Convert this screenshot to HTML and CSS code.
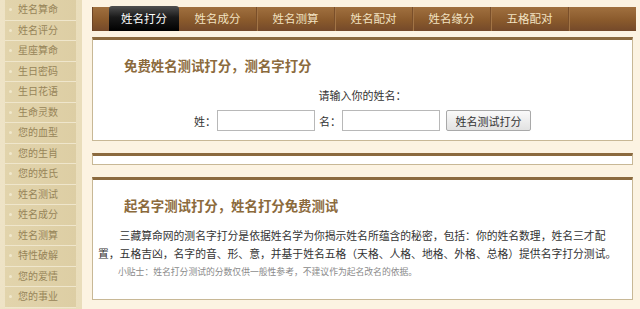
FILE: index.html
```html
<!DOCTYPE html>
<html lang="zh-CN">
<head>
    <meta charset="UTF-8">
    <title>姓名打分</title>
    <link rel="stylesheet" href="styles.css">
</head>
<body>
    <!-- 左侧导航 -->
    <ul class="side-nav">
        <li>姓名算命</li>
        <li>姓名评分</li>
        <li>星座算命</li>
        <li>生日密码</li>
        <li>生日花语</li>
        <li>生命灵数</li>
        <li>您的血型</li>
        <li>您的生肖</li>
        <li>您的姓氏</li>
        <li>姓名测试</li>
        <li>姓名成分</li>
        <li>姓名测算</li>
        <li>特性破解</li>
        <li>您的爱情</li>
        <li>您的事业</li>
    </ul>

    <div class="main">
        <!-- 顶部标签 -->
        <div class="tabs">
            <span class="tab active">姓名打分</span>
            <span class="tab">姓名成分</span>
            <span class="tab">姓名测算</span>
            <span class="tab">姓名配对</span>
            <span class="tab">姓名缘分</span>
            <span class="tab">五格配对</span>
        </div>

        <!-- 输入框 -->
        <div class="panel form-panel">
            <h2 class="panel-title">免费姓名测试打分，测名字打分</h2>
            <p class="prompt">请输入你的姓名：</p>
            <div class="form-row">
                <label>姓：</label>
                <input type="text" class="name-input">
                <label>名：</label>
                <input type="text" class="name-input">
                <button class="btn">姓名测试打分</button>
            </div>
        </div>

        <div class="panel empty-panel"></div>

        <!-- 说明 -->
        <div class="panel info-panel">
            <h2 class="panel-title">起名字测试打分，姓名打分免费测试</h2>
            <p class="desc">三藏算命网的测名字打分是依据姓名学为你揭示姓名所蕴含的秘密，包括：你的姓名数理，姓名三才配置，五格吉凶，名字的音、形、意，并基于姓名五格（天格、人格、地格、外格、总格）提供名字打分测试。</p>
            <p class="tip">小贴士：姓名打分测试的分数仅供一般性参考，不建议作为起名改名的依据。</p>
        </div>
    </div>
</body>
</html>
```

FILE: styles.css
```css
/* 公共样式 */
body {
    margin: 0;
    display: flex;
    align-items: flex-start;
    background: #fcf3e2;
    font-family: "Liberation Sans", "Noto Sans CJK SC", sans-serif;
    color: #333;
    overflow: hidden;
}

/* 左侧导航 */
.side-nav {
    list-style: none;
    margin: 0;
    padding: 0 6px 0 5px;
    width: 71px;
    height: 309px;
    background: linear-gradient(90deg, #eee3c6, #e9ddbb);
}

.side-nav li {
    position: relative;
    height: 19.5px;
    line-height: 19.5px;
    border-bottom: 1px solid #efe6cc;
    padding-left: 13px;
    font-size: 10px;
    color: #978559;
    background: linear-gradient(90deg, #e2d4ac, #ddcea4);
}

.side-nav li::before {
    content: "";
    position: absolute;
    left: 4px;
    top: 8px;
    width: 3px;
    height: 3px;
    border-radius: 50%;
    background: #f1e8cc;
}

/* 主体 */
.main {
    margin-left: 10px;
    width: 544px;
    padding-top: 6px;
}

.tabs {
    display: flex;
    align-items: flex-end;
    height: 24px;
    margin-top: 1px;
    padding-left: 16px;
    background: linear-gradient(#a0703f, #8a5a2c 55%, #74492a);
    border-left: 1px solid #6a4325;
}

.tab {
    width: 77px;
    height: 24px;
    line-height: 24px;
    text-align: center;
    font-size: 11.5px;
    color: #f2e2c2;
    border-right: 1px solid #7a4f2a;
    box-shadow: 1px 0 0 #a27446;
}

.tab.active {
    width: 70px;
    height: 25px;
    line-height: 26px;
    margin-top: -1px;
    color: #fff;
    border: none;
    box-shadow: none;
    border-radius: 3px 3px 0 0;
    background: linear-gradient(#505050, #1a1a1a 45%, #000);
}

/* 面板 */
.panel {
    box-sizing: border-box;
    width: 541px;
    background: #fff;
    border: 1px solid #c8b896;
    border-top: 3px solid #8b6a3f;
    margin-top: 6px;
}

.panel-title {
    margin: 0;
    padding-left: 31px;
    font-size: 13.4px;
    line-height: 20px;
    font-weight: bold;
    color: #8b6a3c;
}

.form-panel {
    height: 104px;
    padding-top: 17px;
}

.prompt {
    margin: 11px 0 0;
    font-size: 11px;
    line-height: 16px;
    text-align: center;
}

.form-row {
    display: flex;
    justify-content: center;
    align-items: center;
    margin-top: 6px;
    font-size: 11px;
}

.form-row label {
    margin-right: 1px;
}

.name-input {
    box-sizing: border-box;
    width: 98px;
    height: 21px;
    padding: 0;
    border: 1px solid #b8b8b8;
    margin-right: 4px;
}

.btn {
    margin-left: 2px;
    width: 85px;
    height: 21px;
    padding: 0;
    font-size: 11px;
    font-family: inherit;
    color: #333;
    border: 1px solid #a9a9a9;
    border-radius: 2px;
    background: linear-gradient(#fafafa, #e2e2e2);
}

.empty-panel {
    height: 12px;
    margin-top: 12px;
}

.info-panel {
    height: 123px;
    margin-top: 12px;
    padding: 17px 0 0 5px;
}

.info-panel .panel-title {
    padding-left: 26px;
}

.desc {
    margin: 10px 0 0;
    width: 522px;
    font-size: 10.8px;
    line-height: 18px;
    text-indent: 2em;
}

.tip {
    margin: 2px 0 0 20px;
    font-size: 8.8px;
    line-height: 14px;
    color: #8a8a8a;
}
```
